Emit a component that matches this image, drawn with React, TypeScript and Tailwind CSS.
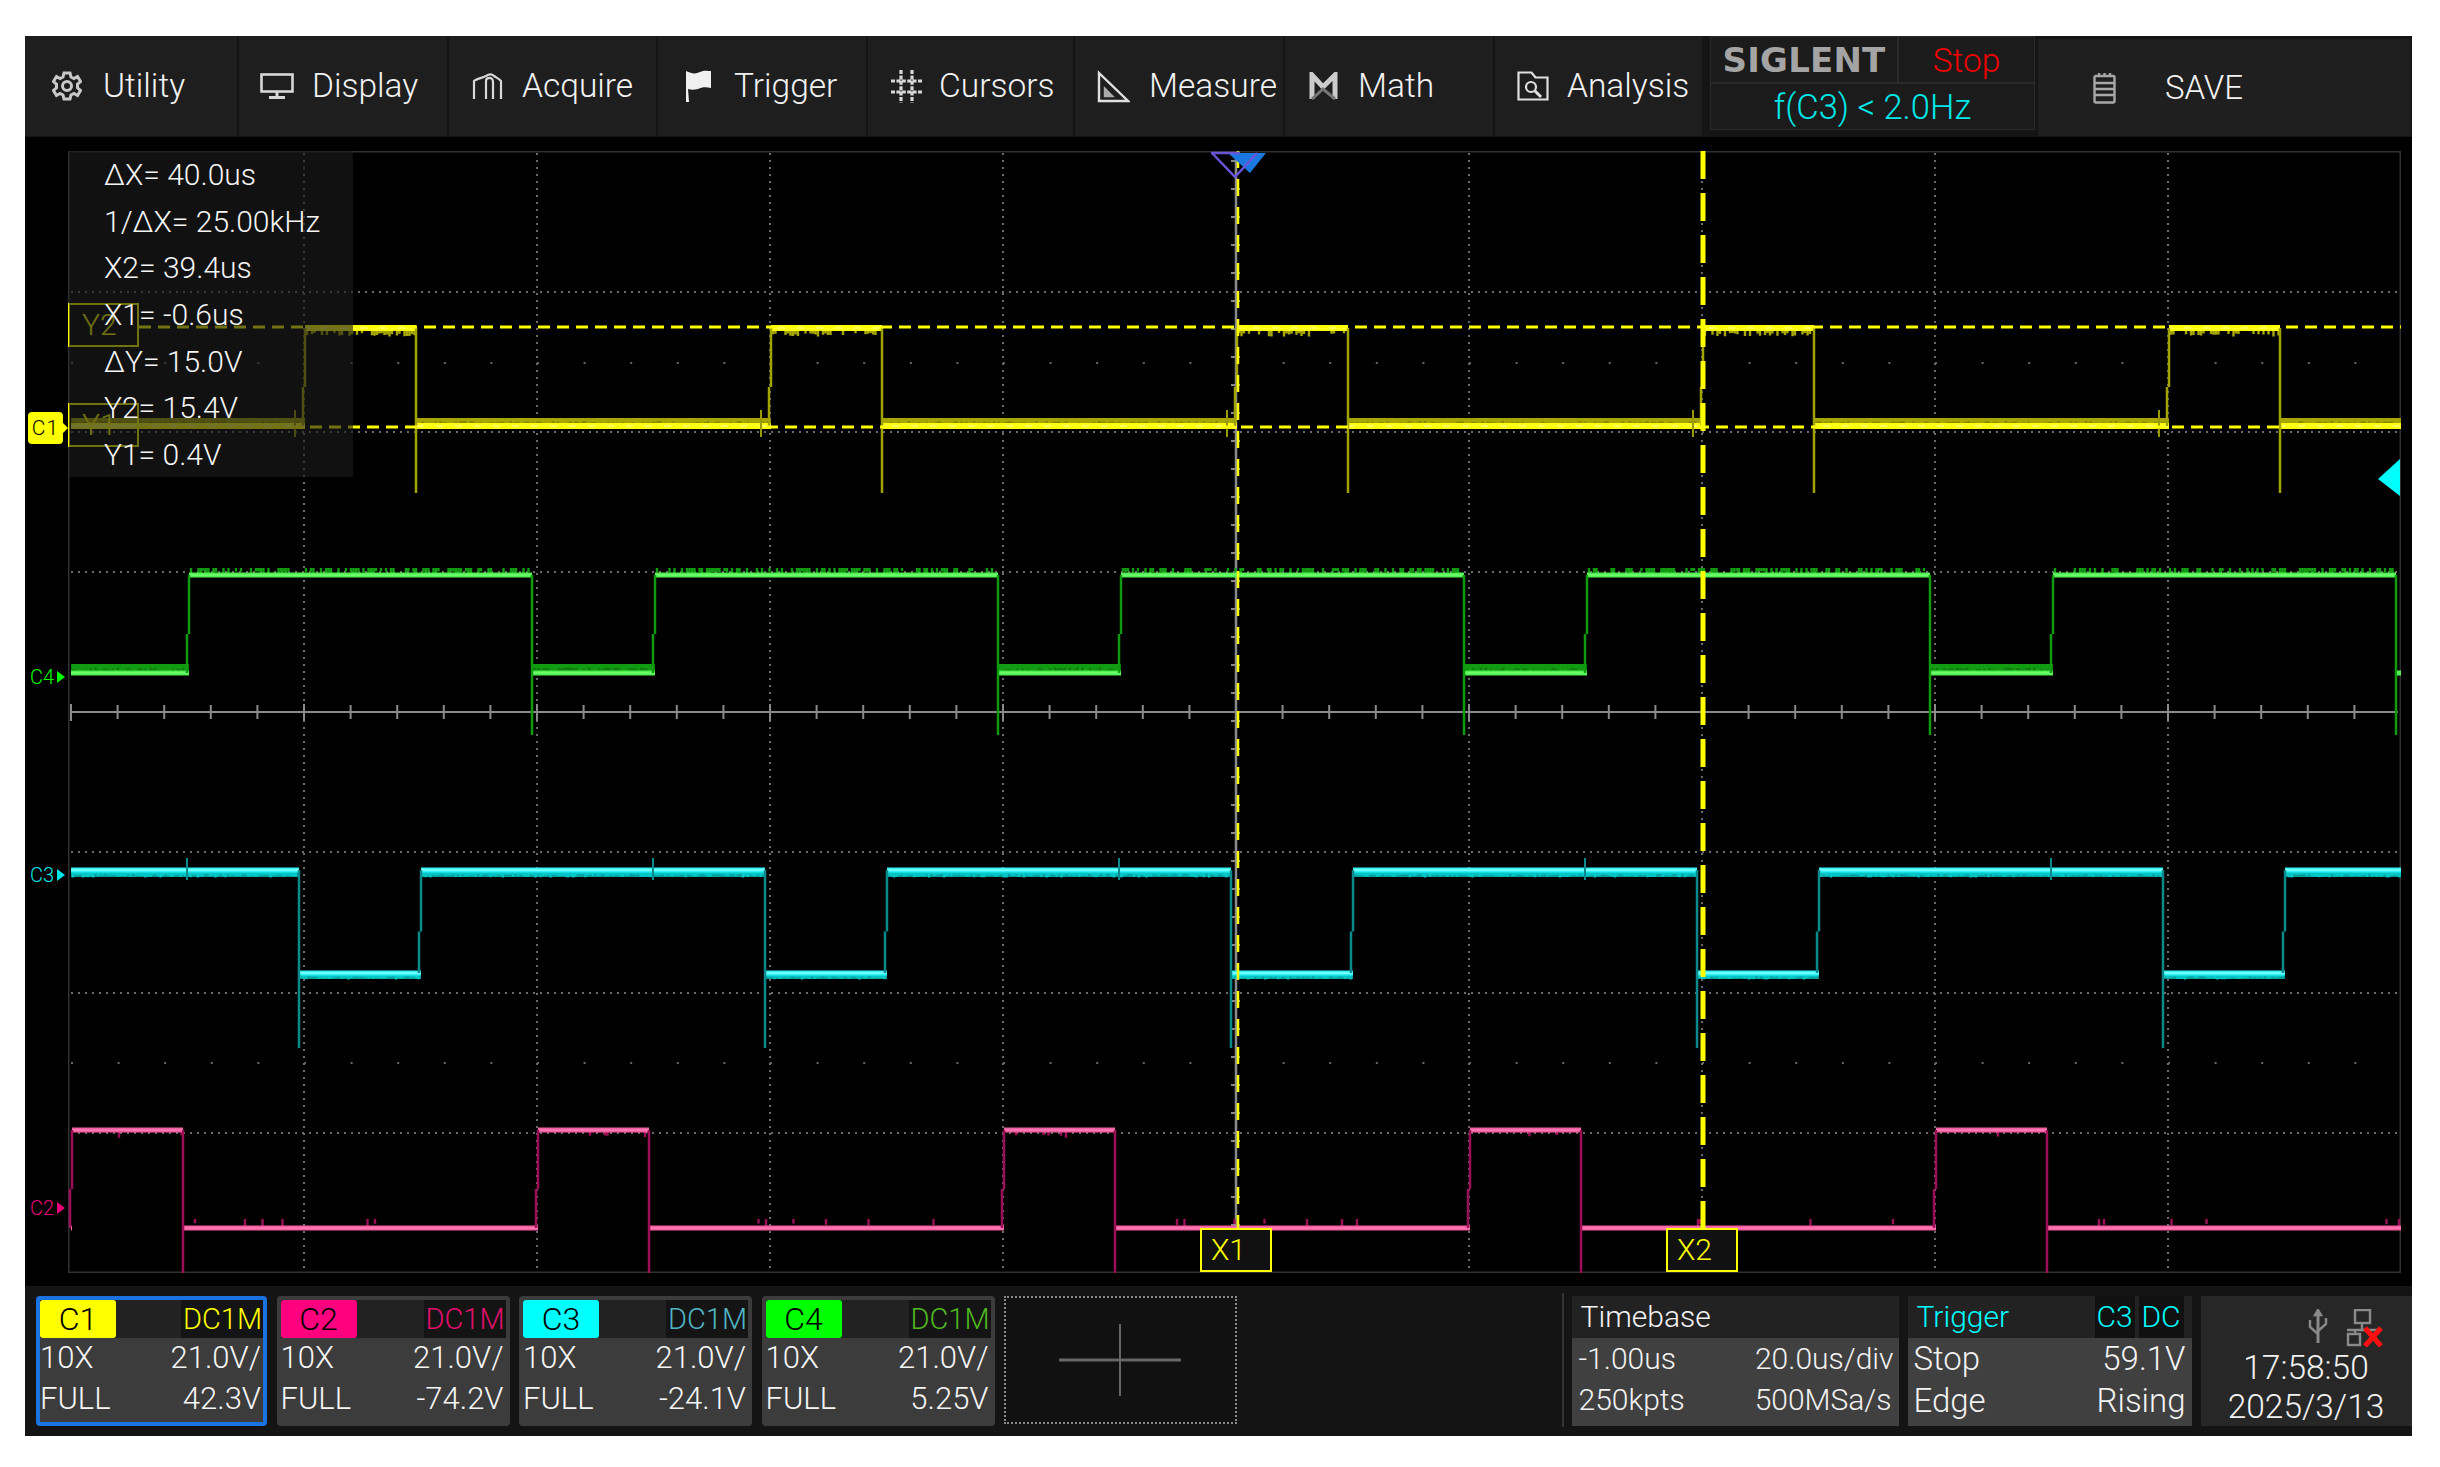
import React from 'react';

const P = 466;
const rep = (a: number) => [0, 1, 2, 3, 4].map((i) => a + i * P);

function rng(seed: number) {
  let s = seed;
  return () => {
    s = (s * 1664525 + 1013904223) % 4294967296;
    return s / 4294967296;
  };
}

function ticks(x0: number, x1: number, y: number, len: number, density: number, seed: number) {
  const r = rng(seed);
  let d = '';
  for (let x = x0 + 2; x < x1 - 1; x += 2.5) {
    if (r() < density) d += `M${x.toFixed(1)} ${y}v${(len * (0.5 + r() * 0.6)).toFixed(1)}`;
  }
  return d;
}

type TraceCfg = {
  hi: number;
  lo: number;
  rises: number[];
  falls: number[];
  startHigh: boolean;
  tail: number;
  bright: string;
  core: string;
  edge: string;
  dim: string;
  th: number;
  hiNoise: [number, number, number];
  loNoise: [number, number, number];
  end: number;
  seed: number;
};

function Trace({ c }: { c: TraceCfg }) {
  const tr = [
    ...c.rises.map((x) => ({ x, up: true })),
    ...c.falls.map((x) => ({ x, up: false })),
  ].sort((a, b) => a.x - b.x);
  const segs: { a: number; b: number; high: boolean }[] = [];
  let cur = 71;
  let high = c.startHigh;
  tr.forEach((t) => {
    if (t.x > cur) segs.push({ a: cur, b: t.x, high });
    cur = t.x;
    high = t.up;
  });
  segs.push({ a: cur, b: c.end, high });
  return (
    <g>
      {segs.map((s, i) => {
        const y = s.high ? c.hi : c.lo;
        const [off, len, dens] = s.high ? c.hiNoise : c.loNoise;
        return (
          <g key={i}>
            {dens >= 0.9 && <rect x={s.a} y={y + off} width={s.b - s.a} height={len} fill={c.dim} opacity={0.8} />}
            <path d={ticks(s.a, s.b, y + off, len, dens, c.seed + i * 37)} stroke={c.dim} strokeWidth={2.4} fill="none" />
            <rect x={s.a} y={y - c.th / 2} width={s.b - s.a} height={c.th} fill={c.bright} />
            <rect x={s.a} y={y - 0.8} width={s.b - s.a} height={1.6} fill={c.core} />
          </g>
        );
      })}
      {c.rises.map((x, i) => (
        <g key={i}>
          <path d={`M${x} ${c.hi}V${(c.hi + c.lo) / 2 + 10}`} stroke={c.edge} strokeWidth={2.5} />
          <path d={`M${x - 2} ${(c.hi + c.lo) / 2 + 10}V${c.lo}`} stroke={c.edge} strokeWidth={2.5} />
        </g>
      ))}
      {c.falls.map((x, i) => (
        <path key={i} d={`M${x} ${c.hi}V${c.tail}`} stroke={c.edge} strokeWidth={2.5} />
      ))}
    </g>
  );
}

const traces: TraceCfg[] = [
  {
    hi: 328, lo: 426, rises: rep(305), falls: rep(416), startHigh: false, tail: 493,
    bright: '#ffff10', core: '#ffff70', edge: '#a3a300', dim: '#a8a800', th: 6,
    hiNoise: [2, 6, 0.6], loNoise: [-8, 6, 1], end: 2401, seed: 11,
  },
  {
    hi: 575, lo: 673, rises: rep(189), falls: rep(532), startHigh: false, tail: 735,
    bright: '#50f050', core: '#70ff70', edge: '#0f9a0f', dim: '#129c12', th: 5,
    hiNoise: [-7, 6, 0.5], loNoise: [-9, 7, 1], end: 2397, seed: 23,
  },
  {
    hi: 870, lo: 973, rises: rep(421), falls: rep(299), startHigh: true, tail: 1048,
    bright: '#30f4f4', core: '#80ffff', edge: '#0a8a8c', dim: '#00c8c8', th: 5,
    hiNoise: [1, 6, 1], loNoise: [1, 5, 1], end: 2401, seed: 41,
  },
  {
    hi: 1130, lo: 1228, rises: rep(72), falls: rep(183), startHigh: false, tail: 1273,
    bright: '#f2609f', core: '#ff78b8', edge: '#9c0f58', dim: '#9c0f58', th: 5,
    hiNoise: [2, 6, 0.08], loNoise: [-9, 8, 0.04], end: 2401, seed: 59,
  },
];

function Plot() {
  const gx = Array.from({ length: 10 }, (_, i) => 71 + 233 * (i + 1)).filter((x) => x !== 1236 && x < 2400);
  const gy = [292, 432, 572, 852, 993, 1133];
  const tx = Array.from({ length: 50 }, (_, i) => 71 + 46.6 * i);
  const ty = Array.from({ length: 41 }, (_, i) => 151 + 28 * i);
  return (
    <svg viewBox="68 151 2333 1122" className="block h-[1122px] w-[2333px]">
      <rect x="68" y="151" width="2333" height="1122" fill="#000" stroke="#303030" strokeWidth="3" />
      {gx.map((x) => (
        <path key={x} d={`M${x} 153V1271`} stroke="#6c6c6c" strokeWidth="2" strokeDasharray="2 5" />
      ))}
      {gy.map((y) => (
        <path key={y} d={`M71 ${y}H2398`} stroke="#6c6c6c" strokeWidth="2" strokeDasharray="2 5" />
      ))}
      {[362, 1062].map((y) => (
        <g key={y}>
          {tx.map((x) => (
            <rect key={x} x={x} y={y} width="2" height="2" fill="#666" />
          ))}
        </g>
      ))}
      <path d="M71 712H2398" stroke="#8a8a8a" strokeWidth="2" />
      {tx.map((x, i) => (
        <path key={x} d={`M${x} ${i % 5 === 0 ? 704 : 705}V${i % 5 === 0 ? 721 : 719}`} stroke="#8a8a8a" strokeWidth="2" />
      ))}
      <path d="M1236 153V1271" stroke="#8a8a8a" strokeWidth="2.5" />
      {ty.map((y) => (
        <path key={y} d={`M1231 ${y + 10}H1240`} stroke="#8a8a8a" strokeWidth="2" />
      ))}
      {traces.map((c) => (
        <Trace key={c.seed} c={c} />
      ))}
      <path d="M2397 673h4" stroke="#50f050" strokeWidth="5" />
      {rep(299).map((x) => (
        <path key={x} d={`M${x - 112} 858v22`} stroke="#0a8a8c" strokeWidth="2" />
      ))}
      {rep(300).map((x) => (
        <path key={x} d={`M${x - 5} 410v27`} stroke="#9a9a00" strokeWidth="2" />
      ))}
      <path d="M139 327H2401" stroke="#ffff00" strokeWidth="3" strokeDasharray="12 7" />
      <path d="M139 427H2401" stroke="#ffff00" strokeWidth="3" strokeDasharray="12 7" />
      <path d="M1238 151V1228" stroke="#ffff00" strokeWidth="2.5" strokeDasharray="17 11" />
      <path d="M1703 151V1228" stroke="#ffff00" strokeWidth="5" strokeDasharray="28 14" />
      <polygon points="1228,153 1266,153 1250,173" fill="#1a78e0" />
      <polyline points="1212,153 1235,177 1257,153" fill="none" stroke="#6a55d8" strokeWidth="2.5" />
      <path d="M1211 153H1240" stroke="#6a55d8" strokeWidth="2.5" />
      <polygon points="2400,459 2400,496 2378,479" fill="#00ffff" />
    </svg>
  );
}

function ChanLabel({ text, color, cls }: { text: string; color: string; cls: string }) {
  return (
    <div className={`absolute flex items-center text-[20px] leading-none ${cls}`} style={{ color }}>
      <span>{text}</span>
      <svg width="8" height="12" viewBox="0 0 8 12" className="ml-[3px]">
        <polygon points="0,0 8,6 0,12" fill={color} />
      </svg>
    </div>
  );
}

const stroke = '#d8d8d8';

const IconGear = () => (
  <svg width="30" height="30" viewBox="0 0 30 30" fill="none" stroke="#c8c8c8" strokeWidth="3">
    <path d="M12 2h6l1 4 3 1.5 3.5-2 3 5-3 2.7v3.6l3 2.7-3 5-3.5-2-3 1.5-1 4h-6l-1-4-3-1.5-3.5 2-3-5 3-2.7v-3.6l-3-2.7 3-5 3.5 2 3-1.5z" />
    <circle cx="15" cy="15" r="4.5" />
  </svg>
);
const IconMonitor = () => (
  <svg width="34" height="26" viewBox="0 0 34 26" fill="none" stroke={stroke} strokeWidth="2.6">
    <rect x="1.5" y="1.5" width="31" height="17" />
    <path d="M17 18v5M9 24.5h16" strokeWidth="3" />
  </svg>
);
const IconAcquire = () => (
  <svg width="31" height="28" viewBox="0 0 31 28" fill="none" stroke={stroke} strokeWidth="2.2">
    <path d="M2 27V9C4 7 10 6 14 4c3-2 6-2 8 0 3 2 5 3 7 5v18" />
    <path d="M14 27V9c0-3 4-4 6-2 1 1 1 2 1 3v17" />
  </svg>
);
const IconFlag = () => (
  <svg width="30" height="34" viewBox="0 0 30 34" fill="#f0f0f0">
    <path d="M3 2c6 3 10 3 14 1 4-2 8-1 11-1v17c-5-1-9-1-13 1-4 1-7 1-10 0l1 13H3z" />
  </svg>
);
const IconCursors = () => (
  <svg width="32" height="33" viewBox="0 0 32 33" stroke="#d8d8d8" strokeWidth="3.2" strokeDasharray="4 1.4">
    <path d="M10 0v33M21 0v33M0 11h32M0 22h32" />
  </svg>
);
const IconMeasure = () => (
  <svg width="33" height="33" viewBox="0 0 33 33" fill="none" stroke="#e0e0e0" strokeWidth="2.4">
    <path d="M2 3v28h29z" />
    <path d="M8 19v7h7z" fill="#aaa" stroke="#aaa" />
  </svg>
);
const IconMath = () => (
  <svg width="29" height="28" viewBox="0 0 29 28" fill="none" stroke="#c0c0c0" strokeWidth="4">
    <path d="M3 27V3l11 12L26 3v24" stroke="#ccc" strokeWidth="5" />
    <path d="M3 27l11-10 12 10" stroke="#777" strokeWidth="3" />
  </svg>
);
const IconAnalysis = () => (
  <svg width="32" height="30" viewBox="0 0 32 30" fill="none" stroke="#e0e0e0" strokeWidth="2.2">
    <path d="M1.5 28.5V1.5h13l4 5h12v22z" />
    <circle cx="14" cy="16" r="5" />
    <path d="M18 20l6 6" strokeWidth="3" />
  </svg>
);
const IconSave = () => (
  <svg width="23" height="32" viewBox="0 0 23 32" fill="none" stroke="#a8a8a8" strokeWidth="2.4">
    <rect x="1.5" y="4" width="20" height="26.5" rx="1.5" />
    <path d="M6 1v3M11.5 1v3M17 1v3M2 11h19M2 17h19M2 23h19" />
  </svg>
);

const menu = [
  { label: 'Utility', w: 'w-[214px]', pl: 'pl-[27px]', slot: 'w-[51px]', icon: <IconGear /> },
  { label: 'Display', w: 'w-[210px]', pl: 'pl-[21px]', slot: 'w-[52px]', icon: <IconMonitor /> },
  { label: 'Acquire', w: 'w-[209px]', pl: 'pl-[23px]', slot: 'w-[50px]', icon: <IconAcquire /> },
  { label: 'Trigger', w: 'w-[210px]', pl: 'pl-[25px]', slot: 'w-[51px]', icon: <IconFlag /> },
  { label: 'Cursors', w: 'w-[207px]', pl: 'pl-[23px]', slot: 'w-[48px]', icon: <IconCursors /> },
  { label: 'Measure', w: 'w-[210px]', pl: 'pl-[22px]', slot: 'w-[52px]', icon: <IconMeasure /> },
  { label: 'Math', w: 'w-[210px]', pl: 'pl-[24px]', slot: 'w-[49px]', icon: <IconMath /> },
  { label: 'Analysis', w: 'w-[209px]', pl: 'pl-[22px]', slot: 'w-[50px]', icon: <IconAnalysis /> },
];

function Header() {
  return (
    <div className="flex h-[101px] bg-[#151515]">
      {menu.map((m) => (
        <div key={m.label} className={`flex h-[100px] items-center border-r-2 border-[#141414] bg-[#1e1e1e] ${m.w} ${m.pl}`}>
          <div className={`flex shrink-0 items-center ${m.slot}`}>{m.icon}</div>
          <span className="whitespace-nowrap text-[33.5px] leading-none text-[#f2f2f2]">{m.label}</span>
        </div>
      ))}
      <div className="ml-[6px] flex h-[94px] w-[325px] flex-col border border-[#2a2a2a] bg-[#1b1b1b]">
        <div className="flex h-[47px] border-b-2 border-[#2a2a2a]">
          <div className="flex w-[188px] items-center justify-center border-r-2 border-[#2a2a2a] text-[34px] font-bold leading-none tracking-[0.2px] text-[#a4a4a4] [font-family:'DejaVu_Sans',sans-serif]">
            SIGLENT
          </div>
          <div className="flex flex-1 items-center justify-center pt-[3px] text-[33.5px] leading-none text-[#f00000]">Stop</div>
        </div>
        <div className="flex flex-1 items-center justify-center pt-[2px] text-[34.5px] leading-none text-[#00e8e8]">f(C3) &lt; 2.0Hz</div>
      </div>
      <div className="ml-[3px] mt-[3px] flex h-[97px] w-[372px] items-center bg-[#1f1f1f] pl-[55px]">
        <div className="w-[72px]">
          <IconSave />
        </div>
        <span className="text-[33px] leading-none text-[#f2f2f2]">SAVE</span>
      </div>
    </div>
  );
}

const readings = ['ΔX= 40.0us', '1/ΔX= 25.00kHz', 'X2= 39.4us', 'X1= -0.6us', 'ΔY= 15.0V', 'Y2= 15.4V', 'Y1= 0.4V'];

function PlotArea() {
  return (
    <div className="relative h-[1149px] bg-black pl-[43px] pr-[11px] pt-[14px]">
      <Plot />
      {/* Y cursor labels */}
      <div className="absolute left-[43px] top-[166px] flex h-[44px] w-[71px] items-center border-2 border-[#ffff00] pl-[12px] text-[30px] leading-none text-[#ffff00]">Y2</div>
      <div className="absolute left-[43px] top-[266px] flex h-[44px] w-[71px] items-center border-2 border-[#ffff00] pl-[12px] text-[30px] leading-none text-[#ffff00]">Y1</div>
      {/* measurement readout */}
      <div className="absolute left-[44px] top-[14px] flex h-[326px] w-[284px] flex-col bg-[rgba(28,28,28,0.62)] pl-[35px] pt-[1px] text-[30px] leading-[46.67px] text-[#f5f5f5]">
        {readings.map((r) => (
          <div key={r} className="h-[46.67px] whitespace-nowrap">{r}</div>
        ))}
      </div>
      {/* channel markers */}
      <div className="absolute left-[3px] top-[275px] flex h-[32px] w-[35px] items-center justify-center rounded-[4px] bg-[#ffff00] text-[21px] leading-none tracking-[1px] text-black">C1</div>
      <div className="absolute left-[38px] top-[286px] h-0 w-0 border-y-[5px] border-l-[5px] border-y-transparent border-l-[#ffff00]" />
      <ChanLabel text="C4" color="#00ff00" cls="left-[5px] top-[530px]" />
      <ChanLabel text="C3" color="#00e8e8" cls="left-[5px] top-[728px]" />
      <ChanLabel text="C2" color="#e8007a" cls="left-[5px] top-[1061px]" />
      {/* X cursor labels */}
      <div className="absolute left-[1175px] top-[1091px] flex h-[44px] w-[72px] items-center border-2 border-[#ffff00] bg-[#111] pl-[9px] text-[30px] leading-none text-[#ffff00]">X1</div>
      <div className="absolute left-[1641px] top-[1091px] flex h-[44px] w-[72px] items-center border-2 border-[#ffff00] bg-[#111] pl-[9px] text-[30px] leading-none text-[#ffff00]">X2</div>
    </div>
  );
}

const cards = [
  { n: 'C1', tag: 'bg-[#ffff00]', dc: 'text-[#ffff00]', v: '42.3V', border: 'border-[#1a73e0]', w: 'w-[231px]' },
  { n: 'C2', tag: 'bg-[#ff007f]', dc: 'text-[#e0106e]', v: '-74.2V', border: 'border-[#3c3c3c]', w: 'w-[233px]' },
  { n: 'C3', tag: 'bg-[#00ffff]', dc: 'text-[#4fb6c6]', v: '-24.1V', border: 'border-[#3c3c3c]', w: 'w-[233px]' },
  { n: 'C4', tag: 'bg-[#00ff00]', dc: 'text-[#50b820]', v: '5.25V', border: 'border-[#3c3c3c]', w: 'w-[233px]' },
];

function Card({ c }: { c: (typeof cards)[number] }) {
  return (
    <div className={`box-border h-[130px] shrink-0 rounded-[4px] border-4 bg-[#3c3c3c] ${c.border} ${c.w}`}>
      <div className="flex h-[38px] bg-[#222]">
        <div className={`flex w-[76px] items-center justify-center rounded-[3px] text-[32px] leading-none text-black ${c.tag}`}>{c.n}</div>
        <div className={`ml-auto flex w-[82px] items-center justify-end bg-[#141414] pr-[1px] text-[29px] leading-none ${c.dc}`}>DC1M</div>
      </div>
      <div className="flex h-[39px] items-center justify-between pr-[2px] text-[31px] leading-none text-[#f5f5f5]">
        <span>10X</span>
        <span>21.0V/</span>
      </div>
      <div className="flex h-[42px] items-center justify-between pr-[2px] text-[31px] leading-none text-[#f5f5f5]">
        <span>FULL</span>
        <span>{c.v}</span>
      </div>
    </div>
  );
}

function Footer() {
  return (
    <div className="flex h-[150px] bg-[#141414] pl-[11px] pt-[10px]">
      <div className="flex gap-[9.5px]">
        {cards.map((c) => (
          <Card key={c.n} c={c} />
        ))}
      </div>
      <div className="ml-[9px] flex h-[128px] w-[233px] items-center justify-center border-2 border-dotted border-[#8a8a8a] bg-[#111]">
        <svg width="122" height="72" viewBox="0 0 122 72">
          <path d="M0 36h122" stroke="#666" strokeWidth="3" />
          <path d="M61 0v72" stroke="#666" strokeWidth="2" />
        </svg>
      </div>
      <div className="ml-[325px] mt-[-3px] h-[134px] w-[2px] bg-[#333]" />
      <div className="ml-[8px] h-[130px] w-[327px] bg-[#404040]">
        <div className="flex h-[42px] items-center bg-[#222] pl-[9px] text-[30px] leading-none text-[#f2f2f2]">Timebase</div>
        <div className="flex h-[41px] items-center justify-between pl-[7px] pr-[5px] text-[30px] leading-none text-[#f2f2f2]">
          <span>-1.00us</span>
          <span>20.0us/div</span>
        </div>
        <div className="flex h-[42px] items-center justify-between pl-[7px] pr-[7px] text-[30px] leading-none text-[#f2f2f2]">
          <span>250kpts</span>
          <span>500MSa/s</span>
        </div>
      </div>
      <div className="ml-[9px] h-[130px] w-[284px] bg-[#404040]">
        <div className="flex h-[42px] items-center bg-[#222] pl-[9px] text-[30px] leading-none text-[#00ffff]">
          <span>Trigger</span>
          <div className="ml-auto mr-[8px] flex h-full">
            <span className="flex w-[40px] items-center justify-center bg-[#111] text-[30px]">C3</span>
            <span className="ml-[4px] flex w-[45px] items-center justify-center bg-[#111] text-[30px]">DC</span>
          </div>
        </div>
        <div className="flex h-[41px] items-center justify-between px-[6px] text-[33px] leading-none text-[#f2f2f2]">
          <span>Stop</span>
          <span>59.1V</span>
        </div>
        <div className="flex h-[42px] items-center justify-between px-[6px] text-[33px] leading-none text-[#f2f2f2]">
          <span>Edge</span>
          <span>Rising</span>
        </div>
      </div>
      <div className="ml-[9px] flex h-[130px] w-[211px] flex-col bg-[#272727]">
        <div className="flex h-[49px] shrink-0 items-end justify-end gap-[18px] pr-[28px]">
          <svg width="20" height="36" viewBox="0 0 20 36" fill="none" stroke="#8a8a8a" strokeWidth="2.4">
            <path d="M10 3v31" strokeWidth="3" />
            <path d="M7 6l3-5 3 5z" fill="#8a8a8a" />
            <path d="M2 11v7l8 7M18 9v6l-8 7" />
          </svg>
          <svg width="38" height="38" viewBox="0 0 38 38" className="translate-y-[2px]">
            <g fill="none" stroke="#8a8a8a" strokeWidth="2.4">
              <rect x="9" y="1" width="15" height="13" />
              <path d="M16 14v7M1 21h34M9 21v4" />
              <rect x="2" y="25" width="12" height="11" />
            </g>
            <path d="M19 19l16 18M35 19L19 37" stroke="#ff1010" strokeWidth="5" />
          </svg>
        </div>
        <div className="flex h-[39px] items-center justify-center pt-[6px] text-[33.5px] leading-none text-[#f2f2f2]">17:58:50</div>
        <div className="flex h-[40px] items-center justify-center pt-[6px] text-[33.5px] leading-none text-[#f2f2f2]">2025/3/13</div>
      </div>
    </div>
  );
}

export default function App() {
  return (
    <div className="h-[1467px] w-[2440px] overflow-hidden bg-white pl-[25px] pt-[36px] font-light [font-family:Roboto,'Liberation_Sans',sans-serif]">
      <div className="flex h-[1400px] w-[2387px] flex-col">
        <Header />
        <PlotArea />
        <Footer />
      </div>
    </div>
  );
}
